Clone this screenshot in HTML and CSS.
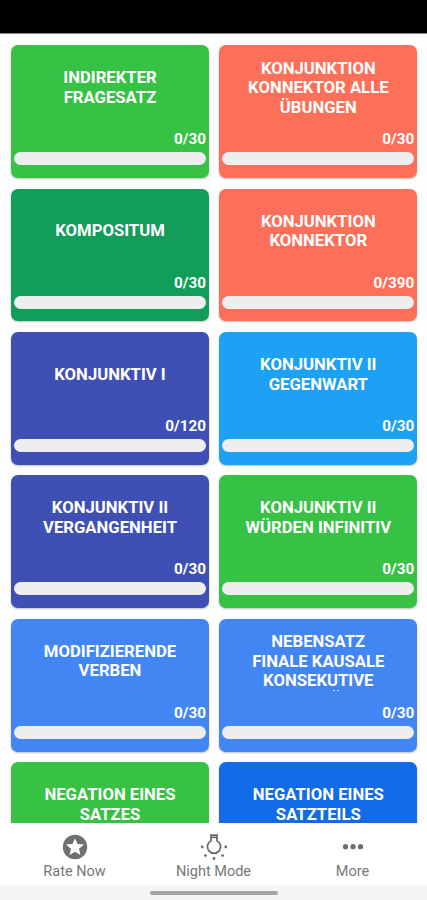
FILE: index.html
```html
<!DOCTYPE html>
<html lang="de">
<head>
<meta charset="utf-8">
<title>Grammatik</title>
<link rel="stylesheet" href="styles.css">
</head>
<body>
<div class="status"></div>
<main class="grid">
  <section class="card green"><h2 class="title">INDIREKTER<br>FRAGESATZ</h2><div class="count">0/30</div><div class="bar"></div></section>
  <section class="card coral"><h2 class="title">KONJUNKTION<br>KONNEKTOR ALLE<br>ÜBUNGEN</h2><div class="count">0/30</div><div class="bar"></div></section>
  <section class="card emerald"><h2 class="title">KOMPOSITUM</h2><div class="count">0/30</div><div class="bar"></div></section>
  <section class="card coral"><h2 class="title">KONJUNKTION<br>KONNEKTOR</h2><div class="count">0/390</div><div class="bar"></div></section>
  <section class="card indigo"><h2 class="title">KONJUNKTIV I</h2><div class="count">0/120</div><div class="bar"></div></section>
  <section class="card sky"><h2 class="title">KONJUNKTIV II<br>GEGENWART</h2><div class="count">0/30</div><div class="bar"></div></section>
  <section class="card indigo"><h2 class="title">KONJUNKTIV II<br>VERGANGENHEIT</h2><div class="count">0/30</div><div class="bar"></div></section>
  <section class="card green"><h2 class="title">KONJUNKTIV II<br>WÜRDEN INFINITIV</h2><div class="count">0/30</div><div class="bar"></div></section>
  <section class="card blue"><h2 class="title">MODIFIZIERENDE<br>VERBEN</h2><div class="count">0/30</div><div class="bar"></div></section>
  <section class="card blue"><h2 class="title cut">NEBENSATZ<br>FINALE KAUSALE<br>KONSEKUTIVE</h2><div class="count">0/30</div><div class="bar"></div></section>
  <section class="card green"><h2 class="title">NEGATION EINES<br>SATZES</h2></section>
  <section class="card royal"><h2 class="title">NEGATION EINES<br>SATZTEILS</h2></section>
</main>
<nav class="tabs">
  <a class="tab">
    <svg class="icon" viewBox="0 0 28 28"><circle cx="14" cy="14" r="12.2" fill="#6f6f6f"/><path fill="#fff" d="M14 5.2l2.500 5.900 6.400.500-4.900 4.200 1.500 6.200-5.500-3.300L8.500 22l1.500-6.200-4.900-4.200 6.400-.500z"/></svg>
    <span>Rate Now</span>
  </a>
  <a class="tab">
    <svg class="icon" viewBox="0 0 28 28"><path fill="none" stroke="#6c6c6c" stroke-width="1.8" d="M11 2.200h6v5.600a6.600 6.600 0 1 1-6 0zM11 4.300h6"/><g fill="#6c6c6c"><circle cx="2.200" cy="14" r="1.400"/><circle cx="25.800" cy="14" r="1.400"/><circle cx="5.500" cy="22.600" r="1.400"/><circle cx="22.500" cy="22.600" r="1.400"/><circle cx="14" cy="25.500" r="1.400"/></g></svg>
    <span>Night Mode</span>
  </a>
  <a class="tab">
    <svg class="icon" viewBox="0 0 28 28"><g fill="#6c6c6c"><circle cx="6.500" cy="13.700" r="2.600"/><circle cx="14" cy="13.700" r="2.600"/><circle cx="21.500" cy="13.700" r="2.600"/></g></svg>
    <span>More</span>
  </a>
</nav>
<div class="system"><div class="pill"></div></div>
</body>
</html>
```
FILE: styles.css
```css
* { box-sizing: border-box; }
body {
  margin: 0;
  height: 900px;
  display: flex;
  flex-direction: column;
  overflow: hidden;
  background: #fefefe;
  font-family: Roboto, "Liberation Sans", sans-serif;
}
.status { height: 34px; flex: none; background: #000; border-bottom: 1px solid #888; }
.grid {
  height: 789px;
  flex: none;
  overflow: hidden;
  display: grid;
  grid-template-columns: 198px 198px;
  grid-auto-rows: 132.800px;
  gap: 10.600px 10.300px;
  padding: 11.300px 10px 0 11px;
}
.card {
  display: flex;
  flex-direction: column;
  border-radius: 7px;
  padding: 13px 3px 0;
  color: #fff;
  box-shadow: 0 1px 2px rgba(0, 0, 0, .25);
}
.green { background: #37c145; }
.coral { background: #fc6f59; }
.emerald { background: #129d59; }
.indigo { background: #3f50b4; }
.sky { background: #1da1f4; }
.blue { background: #4286f4; }
.royal { background: #126ce8; }
.title {
  position: relative;
  height: 59px;
  margin: 0;
  display: flow-root;
  align-content: center;
  text-align: center;
  font-size: 16.700px;
  font-weight: 700;
  line-height: 19.500px;
}
.cut::after {
  content: "";
  position: absolute;
  left: 111px;
  bottom: 0;
  width: 2px;
  height: 1px;
  background: #d5e4ff;
  box-shadow: 4px 0 #d5e4ff;
}
.count {
  margin-top: 13px;
  height: 20px;
  text-align: right;
  font-size: 15.300px;
  font-weight: 700;
  line-height: 19.500px;
}
.bar { margin-top: 2px; height: 13px; border-radius: 7px; background: #efeeee; }
.tabs {
  height: 62px;
  flex: none;
  display: grid;
  grid-template-columns: repeat(3, 139px);
  justify-content: center;
  background: #fff;
}
.tab {
  display: flex;
  flex-direction: column;
  align-items: center;
  padding-top: 10px;
  color: #777;
  font-size: 14.500px;
  line-height: 21px;
}
.icon { width: 28px; height: 28px; }
.system { flex: 1; background: #f5f5f5; padding-top: 6px; }
.pill { width: 128px; height: 4px; margin: 0 auto; border-radius: 2px; background: #a5a5a5; }
```
